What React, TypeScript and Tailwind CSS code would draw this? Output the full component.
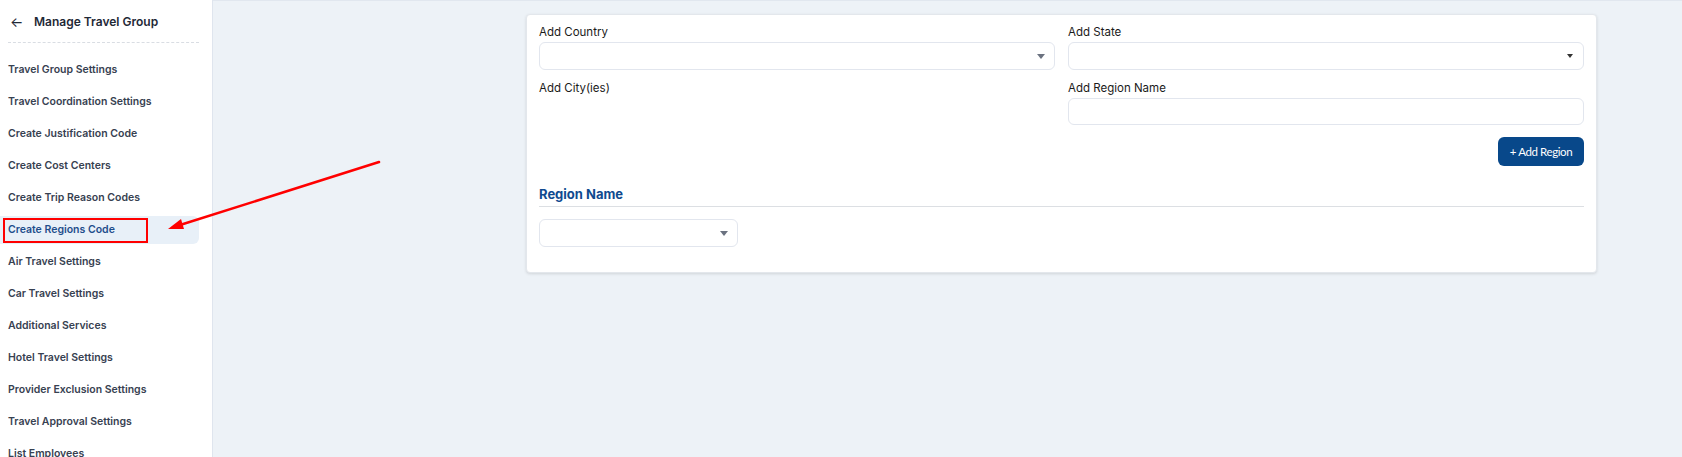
import React from "react";

const items = [
  "Travel Group Settings",
  "Travel Coordination Settings",
  "Create Justification Code",
  "Create Cost Centers",
  "Create Trip Reason Codes",
  "Create Regions Code",
  "Air Travel Settings",
  "Car Travel Settings",
  "Additional Services",
  "Hotel Travel Settings",
  "Provider Exclusion Settings",
  "Travel Approval Settings",
  "List Employees",
];

function Caret({ className }: { className?: string }) {
  return (
    <svg width="8" height="5" viewBox="0 0 8 5" className={className}>
      <path d="M0 0 L8 0 L4 5 Z" fill="currentColor" />
    </svg>
  );
}

export default function App() {
  return (
    <div
      className="relative flex h-[457px] w-[1682px] overflow-hidden bg-[#edf2f7]"
      style={{ fontFamily: "Inter, 'Noto Sans', sans-serif" }}
    >
      {/* Sidebar */}
      <aside className="w-[213px] shrink-0 border-r border-[#dfe5ee] bg-white">
        <div className="flex h-[42px] items-center pl-[10px] pt-[1px]">
          <span className="w-[24px] text-[14px] leading-none text-[#1f2937]">←</span>
          <span className="text-[12px] font-semibold text-[#1f2937]">Manage Travel Group</span>
        </div>
        <div className="mx-[8px] w-[191px] border-t border-dashed border-[#d9dde3]" />
        <nav className="mt-[13px] flex flex-col gap-[4px]">
          {items.map((it) => {
            const active = it === "Create Regions Code";
            return (
              <div
                key={it}
                className={
                  active
                    ? "flex h-[28px] w-[199px] items-center rounded-r-md bg-[#e8f0f8] pl-[8px] text-[10.5px] font-semibold text-[#1f4e8c]"
                    : "flex h-[28px] w-[199px] items-center pl-[8px] text-[10.5px] font-semibold text-[#374151]"
                }
              >
                {it}
              </div>
            );
          })}
        </nav>
      </aside>

      {/* Main */}
      <main className="flex-1 border-t border-[#e1e7ef] pt-[13px] pl-[313px]">
        <div className="w-[1071px] rounded-[4px] border border-[#e3e7ec] bg-white px-[12px] pt-[9px] pb-[25px] shadow-[0_1px_3px_rgba(0,0,0,0.12)]">
          <div className="grid grid-cols-2 gap-x-[13px]">
            <div>
              <div className="h-[18px] text-[11.5px] leading-[16px] text-[#1a1a1a]">Add Country</div>
              <div className="flex h-[28px] items-center justify-end rounded-[6px] border border-[#e2e6ee] pr-[9px] text-[#6b7280]">
                <Caret />
              </div>
            </div>
            <div>
              <div className="h-[18px] text-[11.5px] leading-[16px] text-[#1a1a1a]">Add State</div>
              <div className="flex h-[28px] items-center justify-end rounded-[6px] border border-[#e2e6ee] pr-[10px] text-[#333]">
                <svg width="6" height="4" viewBox="0 0 6 4">
                  <path d="M0 0 L6 0 L3 4 Z" fill="currentColor" />
                </svg>
              </div>
            </div>
            <div className="mt-[10px]">
              <div className="h-[18px] text-[11.5px] leading-[16px] text-[#1a1a1a]">Add City(ies)</div>
            </div>
            <div className="mt-[10px]">
              <div className="h-[18px] text-[11.5px] leading-[16px] text-[#1a1a1a]">Add Region Name</div>
              <div className="h-[27px] rounded-[6px] border border-[#e2e6ee]" />
            </div>
          </div>
          <div className="mt-[12px] flex justify-end">
            <button
              className="flex h-[29px] w-[86px] items-center justify-center rounded-[6px] bg-[#08488a] text-[11.5px] tracking-[-0.4px] text-white"
              style={{ fontFamily: "Lato, sans-serif" }}
            >
              + Add Region
            </button>
          </div>
          <div className="mt-[18px] border-b border-[#dcdfe3] pb-[2px] text-[13px] font-bold leading-[20px] text-[#0f4a8f]">
            Region Name
          </div>
          <div className="mt-[12px] flex h-[28px] w-[199px] items-center justify-end rounded-[6px] border border-[#e2e6ee] pr-[9px] text-[#6b7280]">
            <Caret />
          </div>
        </div>
      </main>

      {/* Annotation: red box */}
      <div className="pointer-events-none absolute left-[3px] top-[218px] h-[25px] w-[145px] border-2 border-[#ff0000]" />
      {/* Annotation: arrow */}
      <svg
        className="pointer-events-none absolute left-0 top-0"
        width="1682"
        height="457"
        viewBox="0 0 1682 457"
      >
        <line x1="379" y1="162" x2="180" y2="225" stroke="#ff0000" strokeWidth="2.5" strokeLinecap="round" />
        <path d="M168 229 L181 219 L184 229 Z" fill="#ff0000" />
      </svg>
    </div>
  );
}
